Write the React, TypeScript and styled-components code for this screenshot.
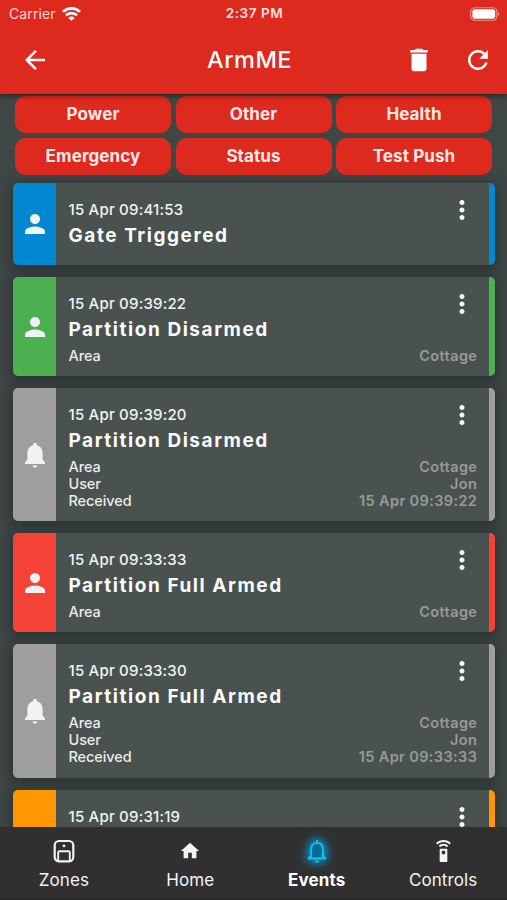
import React from "react";
import styled, { createGlobalStyle, css } from "styled-components";

const Global = createGlobalStyle`
  * { box-sizing: border-box; }
  body { margin: 0; background: #3f4746; font-family: Inter, "Liberation Sans", sans-serif; }
`;

const Screen = styled.div`
  width: 507px;
  height: 900px;
  overflow: hidden;
  display: flex;
  flex-direction: column;
  background: #3f4746;
  color: #fff;
`;

const Header = styled.header`
  flex: none;
  height: 94px;
  background: #de291e;
  box-shadow: 0 2px 5px rgba(0, 0, 0, 0.45);
  z-index: 1;
`;

const StatusBar = styled.div`
  height: 27px;
  padding: 0 7px 0 9px;
  display: grid;
  grid-template-columns: 1fr auto 1fr;
  align-items: center;
  font-size: 14px;
  line-height: 27px;
  color: #ffd9d3;
`;

const Carrier = styled.div`
  display: flex;
  align-items: center;
  gap: 6px;
  letter-spacing: 0.1px;
`;

const Clock = styled.div`
  font-size: 13.5px;
  font-weight: 600;
  letter-spacing: 0.55px;
  color: #ffe3de;
`;

const Battery = styled.svg`
  justify-self: end;
  display: block;
`;

const AppBar = styled.div`
  height: 66px;
  padding: 0 14px 0 20px;
  display: grid;
  grid-template-columns: 187px 1fr auto;
  align-items: center;
`;

const Title = styled.h1`
  margin: 0;
  font-size: 23.5px;
  font-weight: 500;
  line-height: 30px;
  letter-spacing: 0.5px;
`;

const Actions = styled.div`
  display: flex;
  justify-content: flex-end;
  gap: 29px;
`;

const IconButton = styled.button`
  border: 0;
  padding: 0;
  background: none;
  color: inherit;
  display: flex;
  width: 30px;
  height: 30px;
`;

const Glyph = styled.svg`
  display: block;
  fill: currentColor;
`;

const Body = styled.main`
  flex: 1;
  min-height: 0;
  overflow: hidden;
`;

const Filters = styled.div`
  display: grid;
  grid-template-columns: repeat(3, 156px);
  grid-auto-rows: 37px;
  gap: 4.5px;
  padding: 2px 0 0 15px;
`;

const FilterButton = styled.button`
  border: 0;
  padding: 0;
  border-radius: 11px;
  background: #de291e;
  color: #ffe9e6;
  font: 700 17px/35px Inter, sans-serif;
  letter-spacing: 0.1px;
`;

const List = styled.div`
  display: flex;
  flex-direction: column;
  gap: 12px;
  padding: 8.5px 12px 0 13px;
`;

const Card = styled.article<{ $accent: string; $height: number }>`
  flex: none;
  height: ${(p) => p.$height}px;
  display: flex;
  border-radius: 5px;
  overflow: hidden;
  background: #4a5250;
  border-right: 6.5px solid ${(p) => p.$accent};
  box-shadow: 0 3px 12px 3px rgba(20, 32, 30, 0.42);
`;

const Badge = styled.div<{ $accent: string }>`
  flex: none;
  width: 43px;
  display: flex;
  align-items: center;
  justify-content: center;
  background: ${(p) => p.$accent};
  color: #f1f3f3;
`;

const Details = styled.div`
  flex: 1;
  padding: 16px 12px 0 12.5px;
`;

const CardTop = styled.div`
  display: flex;
  justify-content: space-between;
  height: 22px;
`;

const Stamp = styled.time`
  font-size: 15px;
  font-weight: 500;
  line-height: 22px;
  letter-spacing: 0.2px;
  color: #f1f4f3;
`;

const MenuButton = styled(IconButton)`
  margin: -4px 0.5px 0 0;
`;

const CardTitle = styled.h2`
  margin: 1px 0 0;
  font-size: 19px;
  font-weight: 700;
  line-height: 28px;
  letter-spacing: 1.55px;
  color: #fafbfb;
`;

const Fields = styled.dl`
  margin: 2.5px 0 0;
`;

const Field = styled.div`
  display: flex;
  justify-content: space-between;
  height: 17px;
  font-size: 14.5px;
  line-height: 17px;
`;

const Label = styled.dt`
  color: #e9eceb;
  font-weight: 500;
  letter-spacing: -0.1px;
`;

const Value = styled.dd`
  margin: 0 -0.3px 0 0;
  color: #959b99;
  font-weight: 600;
  letter-spacing: 0.38px;
`;

const TabBar = styled.nav`
  flex: none;
  height: 73px;
  display: grid;
  grid-template-columns: repeat(4, 126.4px);
  justify-content: center;
  background: #303030;
  border-bottom: 2px solid #292929;
  z-index: 1;
`;

const Tab = styled.a<{ $active?: boolean }>`
  display: flex;
  flex-direction: column;
  align-items: center;
  padding-top: 12px;
  gap: 5px;
  font-size: 17px;
  line-height: 24px;
  letter-spacing: 0.1px;
  color: #f4f4f4;
  ${(p) =>
    p.$active &&
    css`
      font-weight: 700;
      color: #fff;
    `}
`;

const TabIcon = styled.span<{ $active?: boolean }>`
  height: 24px;
  display: flex;
  align-items: center;
  ${(p) =>
    p.$active &&
    css`
      color: #12bff5;
      filter: drop-shadow(0 0 5px #08a6dd) drop-shadow(0 0 5px rgba(0, 150, 205, 0.7));
    `}
`;

const paths = {
  back: "M20 11H7.83l5.59-5.59L12 4l-8 8 8 8 1.41-1.41L7.83 13H20v-2z",
  trash: "M6 19c0 1.1.9 2 2 2h8c1.1 0 2-.9 2-2V7H6v12zM19 4h-3.5l-1-1h-5l-1 1H5v2h14V4z",
  refresh:
    "M17.65 6.35C16.2 4.9 14.21 4 12 4c-4.42 0-7.99 3.58-7.99 8s3.57 8 7.99 8c3.73 0 6.84-2.55 7.73-6h-2.08c-.82 2.33-3.04 4-5.65 4-3.31 0-6-2.69-6-6s2.69-6 6-6c1.66 0 3.14.69 4.22 1.78L13 11h7V4l-2.35 2.35z",
  person:
    "M12 12c2.21 0 4-1.79 4-4s-1.79-4-4-4-4 1.79-4 4 1.79 4 4 4zm0 2c-2.67 0-8 1.34-8 4v2h16v-2c0-2.66-5.33-4-8-4z",
  bell:
    "M12 2.2c-.9 0-1.400.6-1.400 1.400v.6C7.700 4.900 5.900 7.300 5.900 10.600v5L3.900 18.200v1h16.200v-1l-2-2.600v-5c0-3.300-1.800-5.700-4.700-6.400v-.6c0-.8-.5-1.400-1.400-1.400zM10 20.300h4c0 1-.9 1.700-2 1.700s-2-.7-2-1.700z",
  more:
    "M12 8c1.1 0 2-.9 2-2s-.9-2-2-2-2 .9-2 2 .9 2 2 2zm0 2c-1.1 0-2 .9-2 2s.9 2 2 2 2-.9 2-2-.9-2-2-2zm0 6c-1.1 0-2 .9-2 2s.9 2 2 2 2-.9 2-2-.9-2-2-2z",
  home: "M10 20v-6h4v6h5v-8h3L12 3 2 12h3v8z",
  remote:
    "M15 9H9c-.55 0-1 .45-1 1v12c0 .55.45 1 1 1h6c.55 0 1-.45 1-1V10c0-.55-.45-1-1-1zm-3 6c-1.1 0-2-.9-2-2s.9-2 2-2 2 .9 2 2-.9 2-2 2zM7.05 6.05l1.41 1.41C9.37 6.56 10.62 6 12 6s2.63.56 3.54 1.46l1.41-1.41C15.68 4.78 13.93 4 12 4s-3.68.78-4.95 2.05zM12 0C8.96 0 6.21 1.23 4.22 3.22l1.41 1.41C7.26 3.01 9.51 2 12 2s4.74 1.01 6.36 2.64l1.41-1.41C17.79 1.23 15.04 0 12 0z",
};

function Icon({ name, size = 30 }: { name: keyof typeof paths; size?: number }) {
  return (
    <Glyph width={size} height={size} viewBox="0 0 24 24">
      <path d={paths[name]} />
    </Glyph>
  );
}

function WifiIcon() {
  return (
    <svg width="19" height="14" viewBox="0 0 19 14" fill="none" stroke="#fff" strokeWidth="2.7">
      <path d="M1 4.900a12.200 12.200 0 0 1 17 0" />
      <path d="M4 8.300a8 8 0 0 1 11 0" />
      <path d="M9.5 13.800 6.400 10.900a4.400 4.400 0 0 1 6.200 0z" fill="#fff" stroke="none" />
    </svg>
  );
}

function BatteryIcon() {
  return (
    <Battery width="30" height="14" viewBox="0 0 30 14">
      <rect x="0.7" y="0.7" width="26.2" height="12.6" rx="4" fill="none" stroke="#f3948d" strokeWidth="1.1" />
      <rect x="2.4" y="2.2" width="22.8" height="9.6" rx="2.4" fill="#fff" />
      <path d="M28.2 5v4c1.400-.5 1.400-3.500 0-4z" fill="#f3a29c" />
    </Battery>
  );
}

function ZonesIcon() {
  return (
    <svg width="22" height="24" viewBox="0 0 22 24" fill="none" stroke="#f2f2f2">
      <rect x="1.7" y="2" width="18.6" height="20.400" rx="4.4" strokeWidth="2.2" />
      <path d="M5.200 22V13.400q0-1.200 1.200-1.200h9.200q1.200 0 1.200 1.200V22" strokeWidth="1.900" />
      <circle cx="11" cy="6.900" r="1.400" fill="#f2f2f2" stroke="none" />
    </svg>
  );
}

function BellOutlineIcon() {
  return (
    <svg width="20" height="24" viewBox="0 0 20 24" fill="none" stroke="currentColor" strokeWidth="2">
      <path d="M4.1 18.5V10.2C4.1 6.4 6.4 4 10 4s5.900 2.400 5.900 6.200v8.300" fill="#0b6a8c" />
      <path d="M10 4V1M.8 19.500h18.400" />
      <path d="M4 17l-2.500 2.500M16 17l2.500 2.500" />
      <path d="M7.900 21.700h4.200c0 2.500-4.200 2.500-4.200 0z" fill="currentColor" stroke="none" />
    </svg>
  );
}

const filters = ["Power", "Other", "Health", "Emergency", "Status", "Test Push"];

type EventItem = {
  accent: string;
  icon?: "person" | "bell";
  height: number;
  time: string;
  title: string;
  fields: [string, string][];
};

const events: EventItem[] = [
  { accent: "#0288d1", icon: "person", height: 82, time: "15 Apr 09:41:53", title: "Gate Triggered", fields: [] },
  { accent: "#4caf50", icon: "person", height: 99, time: "15 Apr 09:39:22", title: "Partition Disarmed", fields: [["Area", "Cottage"]] },
  {
    accent: "#9e9e9e", icon: "bell", height: 133.3, time: "15 Apr 09:39:20", title: "Partition Disarmed",
    fields: [["Area", "Cottage"], ["User", "Jon"], ["Received", "15 Apr 09:39:22"]],
  },
  { accent: "#f44336", icon: "person", height: 99, time: "15 Apr 09:33:33", title: "Partition Full Armed", fields: [["Area", "Cottage"]] },
  {
    accent: "#9e9e9e", icon: "bell", height: 133.5, time: "15 Apr 09:33:30", title: "Partition Full Armed",
    fields: [["Area", "Cottage"], ["User", "Jon"], ["Received", "15 Apr 09:33:33"]],
  },
  { accent: "#ff9800", height: 99, time: "15 Apr 09:31:19", title: "", fields: [] },
];

function EventCard({ event }: { event: EventItem }) {
  return (
    <Card $accent={event.accent} $height={event.height}>
      <Badge $accent={event.accent}>{event.icon && <Icon name={event.icon} />}</Badge>
      <Details>
        <CardTop>
          <Stamp>{event.time}</Stamp>
          <MenuButton aria-label="More">
            <Icon name="more" />
          </MenuButton>
        </CardTop>
        {event.title && <CardTitle>{event.title}</CardTitle>}
        {event.fields.length > 0 && (
          <Fields>
            {event.fields.map(([label, value]) => (
              <Field key={label}>
                <Label>{label}</Label>
                <Value>{value}</Value>
              </Field>
            ))}
          </Fields>
        )}
      </Details>
    </Card>
  );
}

export default function App() {
  return (
    <Screen>
      <Global />
      <Header>
        <StatusBar>
          <Carrier>
            Carrier <WifiIcon />
          </Carrier>
          <Clock>2:37 PM</Clock>
          <BatteryIcon />
        </StatusBar>
        <AppBar>
          <IconButton aria-label="Back">
            <Icon name="back" />
          </IconButton>
          <Title>ArmME</Title>
          <Actions>
            <IconButton aria-label="Delete">
              <Icon name="trash" />
            </IconButton>
            <IconButton aria-label="Refresh">
              <Icon name="refresh" />
            </IconButton>
          </Actions>
        </AppBar>
      </Header>
      <Body>
        <Filters>
          {filters.map((f) => (
            <FilterButton key={f}>{f}</FilterButton>
          ))}
        </Filters>
        <List>
          {events.map((e) => (
            <EventCard key={e.time} event={e} />
          ))}
        </List>
      </Body>
      <TabBar>
        <Tab>
          <TabIcon><ZonesIcon /></TabIcon>
          Zones
        </Tab>
        <Tab>
          <TabIcon><Icon name="home" size={22} /></TabIcon>
          Home
        </Tab>
        <Tab $active>
          <TabIcon $active><BellOutlineIcon /></TabIcon>
          Events
        </Tab>
        <Tab>
          <TabIcon><Icon name="remote" size={23} /></TabIcon>
          Controls
        </Tab>
      </TabBar>
    </Screen>
  );
}
